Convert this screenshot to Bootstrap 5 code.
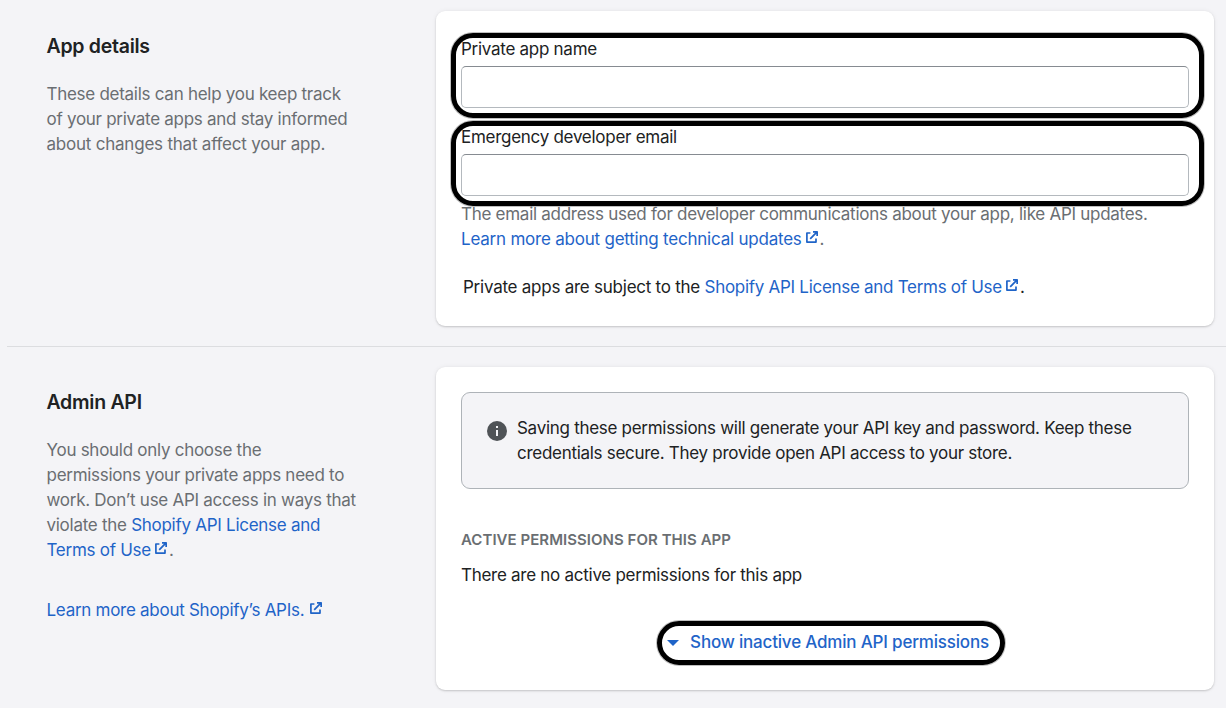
<!DOCTYPE html>
<html lang="en">
<head>
<meta charset="utf-8">
<meta name="viewport" content="width=device-width, initial-scale=1">
<title>Create private app</title>
<link href="https://cdn.jsdelivr.net/npm/bootstrap@5.3.0/dist/css/bootstrap.min.css" rel="stylesheet">
<style>
  body { background: #f4f4f7; color: #202223; font-family: Inter, "Liberation Sans", sans-serif; font-size: 17px; line-height: 25px; letter-spacing: -.275px; }
  a { color: #1f64c8; text-decoration: none; }
  h2 { font-size: 19.5px; line-height: 25px; font-weight: 600; letter-spacing: -.27px; margin: 0 0 23px; }
  p { margin: 0; }
  main { height: 708px; overflow: hidden; }
  .muted-text { color: #6a6e72; }
  .intro { width: 436px; padding: 23px 0 0 46.5px; }
  .panel { width: 778px; border: 0; border-radius: 9px; padding: 25px; box-shadow: 0 0 5px rgba(23,24,24,.06), 0 1px 2px rgba(0,0,0,.17); color: inherit; }
  .panel-details { height: 315px; padding-top: 26px; }
  .panel-api { height: 323px; }
  .divider { height: 1px; background: #dcdde0; margin: 20px 0 20px 7px; }
  .field + .field { margin-top: 17px; }
  .form-label { display: block; margin: 0 0 4px; }
  .form-control { height: 42px; border: 1px solid #b4b9be; border-top-color: #868b91; border-radius: 5px; padding: 0 14px; }
  .marked { position: relative; }
  .marked::after { content: ""; position: absolute; z-index: 2; inset: -4px -15px -10px -10px; border: 5px solid #000; border-radius: 22px; box-shadow: 0 0 0 1px rgba(0,0,0,.25); pointer-events: none; }
  .ext { width: 12px; height: 12px; margin: 0 1.5px 0 4.5px; vertical-align: 2.2px; display: inline-block; }
  .notice { height: 97px; padding: 23px 25px; border: 1px solid #aeb3b8; border-radius: 9px; background: #f4f4f7; }
  .notice svg { margin: 5px 10px 0 0; flex: none; }
  .notice p { letter-spacing: -.285px; }
  .loose { letter-spacing: -.22px; }
  .sub-title { font-size: 15px; font-weight: 600; letter-spacing: .04px; line-height: 20px; margin: 41px 0 13px; color: #6a6e72; }
  .toggle-link { font-weight: 500; letter-spacing: -.19px; display: flex; align-items: center; padding: 0; border: 0; background: none; color: #1f64c8; }
  .toggle-link svg { margin: 0 11px 0 0; }
  .toggle-link.marked::after { inset: -9px -16px -10px -10px; }
</style>
</head>
<body>
<svg class="d-none">
  <symbol id="external" viewBox="0 0 12 12">
    <path d="M4.4 2H.9v9.1H10V7.6M4.2 7.8l6.6-6.6M7 .85h4.15V5" fill="none" stroke="#1f64c8" stroke-width="1.7" stroke-linejoin="round"/>
  </symbol>
</svg>
<main>
  <section class="d-flex" style="padding-top:11px">
    <div class="intro">
      <h2>App details</h2>
      <p class="muted-text">These details can help you keep track<br>of your private apps and stay informed<br><span class="loose">about changes that affect your app.</span></p>
    </div>
    <div class="card panel panel-details">
      <div class="field marked">
        <label class="form-label" for="name">Private app name</label>
        <input class="form-control" id="name" type="text">
      </div>
      <div class="field marked">
        <label class="form-label" for="email">Emergency developer email</label>
        <input class="form-control" id="email" type="email">
      </div>
      <p class="muted-text text-nowrap" style="margin-top:6px">The email address used for developer communications about your app, like API updates.<br><a class="loose" href="#">Learn more about getting technical updates<svg class="ext"><use href="#external"/></svg></a>.</p>
      <p style="margin:23px 0 0 2px"><span style="letter-spacing:-.245px">Private apps are subject to the </span><a href="#" style="letter-spacing:-.29px">Shopify API License and Terms of Use<svg class="ext"><use href="#external"/></svg></a>.</p>
    </div>
  </section>
  <div class="divider"></div>
  <section class="d-flex">
    <div class="intro">
      <h2>Admin API</h2>
      <p class="muted-text">You should only choose the<br>permissions your private apps need to<br>work. Don’t use API access in ways that<br>violate the <a href="#">Shopify API License and<br>Terms of Use<svg class="ext"><use href="#external"/></svg></a>.</p>
      <p style="margin-top:35px"><a href="#">Learn more about Shopify’s APIs. <svg class="ext" style="margin-left:1px"><use href="#external"/></svg></a></p>
    </div>
    <div class="card panel panel-api">
      <div class="notice d-flex">
        <svg width="20" height="20" viewBox="0 0 20 20"><circle cx="10" cy="10" r="10" fill="#4f5357"/><path d="M9 5h2v2H9zM9 9h2v6H9z" fill="#f4f4f7"/></svg>
        <p>Saving these permissions will generate your API key and password. Keep these<br>credentials secure. They provide open API access to your store.</p>
      </div>
      <h3 class="sub-title">ACTIVE PERMISSIONS FOR THIS APP</h3>
      <p>There are no active permissions for this app</p>
      <div class="d-flex justify-content-center" style="margin:42px 0 0 6px">
        <button class="toggle-link marked" type="button"><svg width="12" height="6"><path d="M0 0h12L6 6z" fill="#1f64c8"/></svg>Show inactive Admin API permissions</button>
      </div>
    </div>
  </section>
</main>
<script src="https://cdn.jsdelivr.net/npm/bootstrap@5.3.0/dist/js/bootstrap.bundle.min.js"></script>
</body>
</html>
